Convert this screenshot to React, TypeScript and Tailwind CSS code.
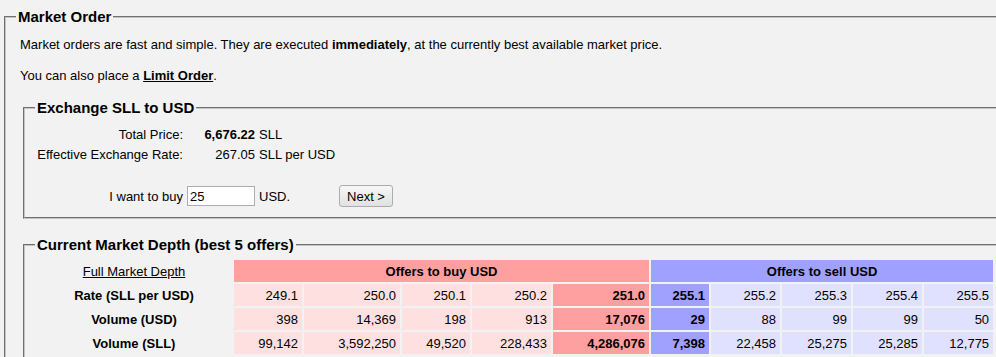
const buyRates = ["249.1", "250.0", "250.1", "250.2", "251.0"];
const sellRates = ["255.1", "255.2", "255.3", "255.4", "255.5"];

const rows = [
  {
    label: "Rate (SLL per USD)",
    buy: buyRates,
    sell: sellRates,
  },
  {
    label: "Volume (USD)",
    buy: ["398", "14,369", "198", "913", "17,076"],
    sell: ["29", "88", "99", "99", "50"],
  },
  {
    label: "Volume (SLL)",
    buy: ["99,142", "3,592,250", "49,520", "228,433", "4,286,076"],
    sell: ["7,398", "22,458", "25,275", "25,285", "12,775"],
  },
];

const colWidths = [196, 68, 96, 68, 79, 96, 58, 69, 69, 69, 69];

const fieldsetClass =
  "border-2 [border-style:groove] border-[#c4c4c4] min-w-0";
const legendClass = "px-[2px] text-[15px] font-bold leading-[17px]";

function DepthTable() {
  return (
    <table className="mt-[5px] -ml-[1px] table-fixed border-separate border-spacing-[2px] w-[961px]">
      <colgroup>
        {colWidths.map((w, i) => (
          <col key={i} style={{ width: w }} />
        ))}
      </colgroup>
      <thead>
        <tr className="h-[22px]">
          <th className="p-0 text-center font-normal">
            <a href="#" className="underline">
              Full Market Depth
            </a>
          </th>
          <th colSpan={5} className="p-0 bg-[#ffa0a0] text-center font-bold">
            Offers to buy USD
          </th>
          <th colSpan={5} className="p-0 bg-[#a0a0ff] text-center font-bold">
            Offers to sell USD
          </th>
        </tr>
      </thead>
      <tbody>
        {rows.map((row) => (
          <tr key={row.label} className="h-[22px]">
            <td className="p-0 text-center font-bold">{row.label}</td>
            {row.buy.map((v, i) => (
              <td
                key={`b${i}`}
                className={
                  i === 4
                    ? "p-0 pr-[4px] text-right font-bold bg-[#ffa0a0]"
                    : "p-0 pr-[4px] text-right bg-[#ffe0e0]"
                }
              >
                {v}
              </td>
            ))}
            {row.sell.map((v, i) => (
              <td
                key={`s${i}`}
                className={
                  i === 0
                    ? "p-0 pr-[4px] text-right font-bold bg-[#a0a0ff]"
                    : "p-0 pr-[4px] text-right bg-[#e0e0ff]"
                }
              >
                {v}
              </td>
            ))}
          </tr>
        ))}
      </tbody>
    </table>
  );
}

export default function App() {
  return (
    <div className="w-[996px] h-[357px] overflow-hidden bg-[#f2f2f2] text-[13px] leading-[15px] text-black font-['Liberation_Sans',Arial,sans-serif]">
      <div className="w-[1060px] pt-[8px] pl-[4px]">
        <fieldset className={`${fieldsetClass} pl-[14px] pb-4`}>
          <legend className={`${legendClass} -ml-[4px]`}>Market Order</legend>
          <p className="mt-[12px]">
            Market orders are fast and simple. They are executed{" "}
            <b>immediately</b>, at the currently best available market price.
          </p>
          <p className="mt-[16px]">
            You can also place a{" "}
            <a href="#" className="font-bold underline">
              Limit Order
            </a>
            .
          </p>

          <fieldset className={`${fieldsetClass} mt-[16px] ml-[3px] pl-[10px] pb-[9px]`}>
            <legend className={legendClass}>Exchange SLL to USD</legend>
            <div className="mt-[8px] grid grid-cols-[148px_68px_76px_auto] grid-rows-[20px_20px_20px_24px] gap-x-[4px] items-center">
              <span className="text-right">Total Price:</span>
              <span className="text-right font-bold">6,676.22</span>
              <span className="col-span-2">SLL</span>

              <span className="text-right">Effective Exchange Rate:</span>
              <span className="text-right">267.05</span>
              <span className="col-span-2">SLL per USD</span>

              <span className="col-span-4" />

              <span className="text-right">I want to buy</span>
              <input
                defaultValue="25"
                className="h-[20px] w-[68px] border border-[#abadb3] bg-white px-[2px] text-[13px] outline-none"
              />
              <span>USD.</span>
              <button className="h-[22px] w-[54px] rounded-[3px] border border-[#acacac] bg-gradient-to-b from-[#f7f7f7] to-[#e1e1e1] text-[13px]">
                Next &gt;
              </button>
            </div>
          </fieldset>

          <fieldset className={`${fieldsetClass} mt-[17px] ml-[3px] pl-[10px] pb-4`}>
            <legend className={legendClass}>
              Current Market Depth (best 5 offers)
            </legend>
            <DepthTable />
          </fieldset>
        </fieldset>
      </div>
    </div>
  );
}
